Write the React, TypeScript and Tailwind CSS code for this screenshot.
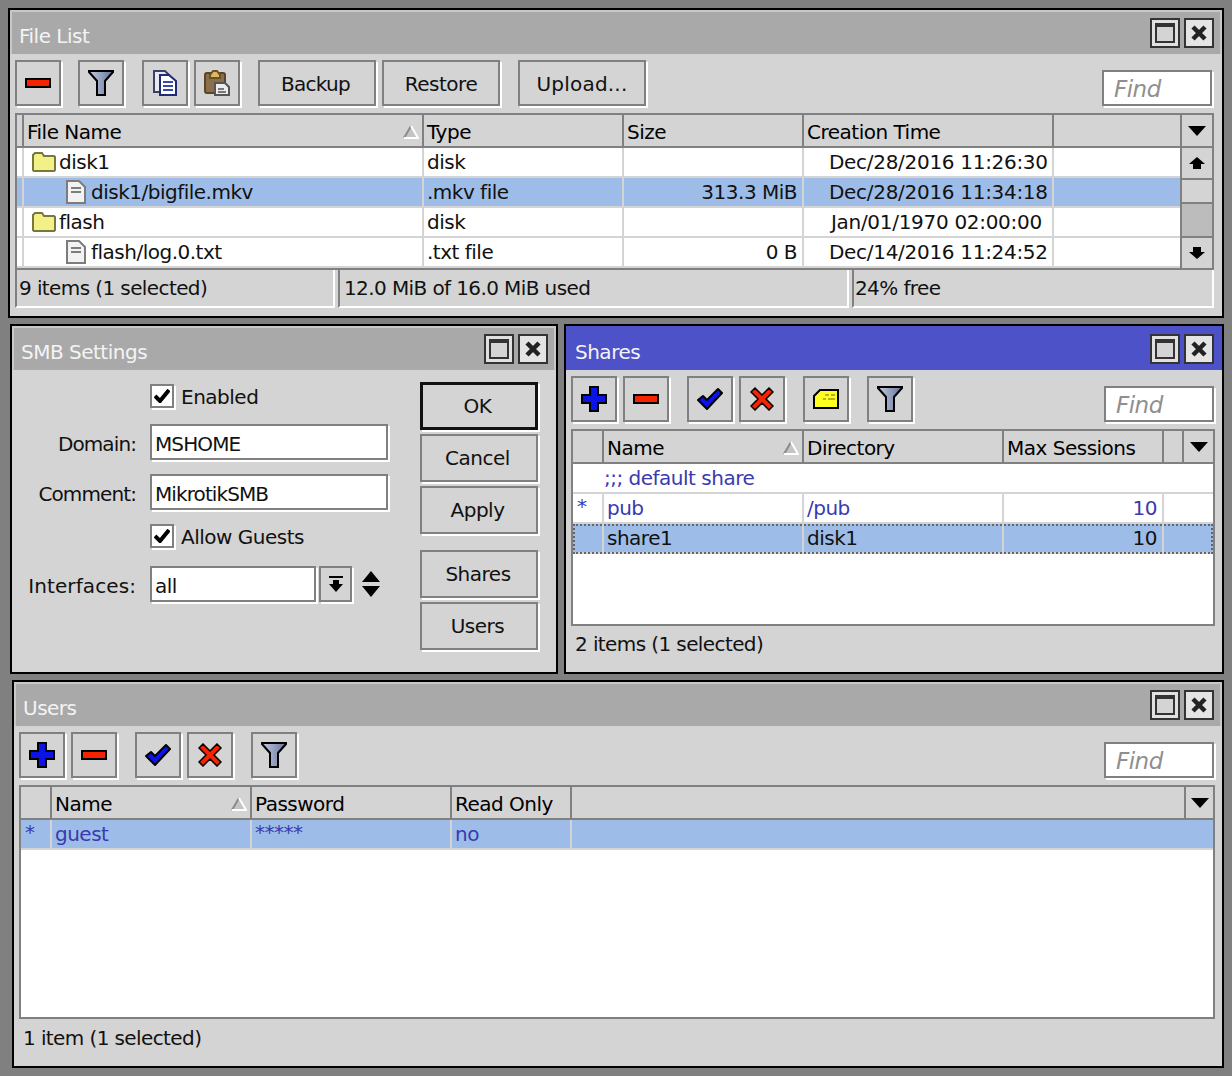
import type { ReactNode } from "react";

const Minus = () => (
  <svg width="26" height="10" viewBox="0 0 26 10">
    <rect x="1" y="1" width="24" height="8" fill="#f52300" stroke="#000" strokeWidth="2" />
  </svg>
);

const Plus = () => (
  <svg width="26" height="26" viewBox="0 0 26 26">
    <path d="M9 1h8v8h8v8h-8v8H9v-8H1V9h8z" fill="#0a14e6" stroke="#000" strokeWidth="2" />
  </svg>
);

const Check = () => (
  <svg width="26" height="24" viewBox="0 0 26 24">
    <path d="M1 13l5-4 4 4L21 2l4 4L10 22z" fill="#0a14e6" stroke="#000" strokeWidth="2" strokeLinejoin="round" />
  </svg>
);

const Cross = () => (
  <svg width="24" height="24" viewBox="0 0 24 24">
    <path d="M1 5l4-4 7 7 7-7 4 4-7 7 7 7-4 4-7-7-7 7-4-4 7-7z" fill="#f52300" stroke="#000" strokeWidth="1.5" />
  </svg>
);

const Funnel = ({ id }: { id: string }) => (
  <svg width="26" height="28" viewBox="0 0 26 28">
    <defs>
      <linearGradient id={id} x1="0" x2="1" y1="0" y2="0">
        <stop offset="0" stopColor="#c2cbe0" />
        <stop offset="1" stopColor="#66749c" />
      </linearGradient>
    </defs>
    <path d="M1 2h24v1l-8 9v14H9V12L1 3z" fill={`url(#${id})`} stroke="#000" strokeWidth="2" />
  </svg>
);

const Copy = () => (
  <svg width="24" height="26" viewBox="0 0 24 26">
    <path d="M1 1h11l4 4v17H1z" fill="#e8e8ee" stroke="#3c3f66" strokeWidth="2" />
    <path d="M7 5h9l7 6v14H7z" fill="#fff" stroke="#1f2a78" strokeWidth="2" />
    <path d="M10 12h10M10 16h10M10 20h10" stroke="#3a4aa8" strokeWidth="2" />
  </svg>
);

const Paste = () => (
  <svg width="26" height="26" viewBox="0 0 26 26">
    <rect x="1" y="3" width="20" height="20" rx="2" fill="#8a6f4a" stroke="#5a4526" strokeWidth="2" />
    <path d="M6 5l3-4h4l3 4v3H6z" fill="#e0b860" stroke="#6a5228" strokeWidth="2" />
    <path d="M11 13h10l4 4v8H11z" fill="#ececec" stroke="#555" strokeWidth="2" />
    <path d="M14 19h6M14 22h8" stroke="#777" strokeWidth="2" />
  </svg>
);

const Note = () => (
  <svg width="26" height="20" viewBox="0 0 26 20">
    <path d="M1 7l6-6h18v18H1z" fill="#ffff20" stroke="#000" strokeWidth="2" />
    <path d="M12 6h4M18 6h4M10 10h3M15 10h7" stroke="#b5b520" strokeWidth="2" />
  </svg>
);

const Folder = () => (
  <svg width="24" height="20" viewBox="0 0 24 20" className="mr-[3px] shrink-0">
    <path d="M1 3l2-2h7l2 3h10l1 1v13l-1 1H2l-1-1z" fill="#f4f088" stroke="#77773f" strokeWidth="2" />
  </svg>
);

const FileIcon = () => (
  <svg width="20" height="24" viewBox="0 0 20 24" className="mr-[5px] shrink-0">
    <path d="M1 1h12l6 6v16H1z" fill="#f2f2f2" stroke="#7c7c7c" strokeWidth="2" />
    <path d="M5 8h10M5 12h10" stroke="#7c7c7c" strokeWidth="2" />
  </svg>
);

const SortMark = () => (
  <svg width="16" height="14" viewBox="0 0 16 14" className="shrink-0">
    <path d="M8 1L1 13h14z" fill="#c4c4c4" />
    <path d="M8 1L1 13" fill="none" stroke="#8a8a8a" strokeWidth="2" />
    <path d="M8 1l7 12H1" fill="none" stroke="#fff" strokeWidth="2" />
  </svg>
);

const DownTri = () => (
  <svg width="18" height="10" viewBox="0 0 18 10">
    <path d="M0 0h18L9 10z" fill="#000" />
  </svg>
);

const ScrollArrow = ({ up }: { up?: boolean }) => (
  <svg width="16" height="12" viewBox="0 0 16 12">
    <path d={up ? "M8 0l8 7h-4v5H4V7H0z" : "M4 0h8v5h4l-8 7-8-7h4z"} fill="#000" />
  </svg>
);

function WinBtns() {
  return (
    <div className="flex items-center gap-[4px]">
      <div className="flex h-[30px] w-[30px] items-center justify-center border-2 border-[#333] bg-[#e0e0e0]">
        <div className="h-[20px] w-[20px] border-2 border-t-4 border-[#333] bg-[#d4d4d4]" />
      </div>
      <div className="flex h-[30px] w-[30px] items-center justify-center border-2 border-[#333] bg-[#e4e4e4]">
        <svg width="16" height="16" viewBox="0 0 16 16">
          <path d="M2 2l12 12M14 2L2 14" stroke="#222" strokeWidth="4.5" />
        </svg>
      </div>
    </div>
  );
}

function Win({
  title,
  className,
  titleClass = "bg-[#a9a9a9]",
  edgeClass = "border-[#c8c8c8]",
  children,
}: {
  title: string;
  className: string;
  titleClass?: string;
  edgeClass?: string;
  children: ReactNode;
}) {
  return (
    <section className={`flex flex-col border-2 border-black bg-[#d4d4d4] ${className}`}>
      <div className={`border-2 border-b-0 ${edgeClass}`}>
        <header className={`flex h-[42px] items-center justify-between pl-[7px] pr-[6px] text-[#f4f4f4] ${titleClass}`}>
          <span className="pt-[5px]">{title}</span>
          <WinBtns />
        </header>
      </div>
      {children}
    </section>
  );
}

function Btn({ children, className = "w-[46px]", active }: { children: ReactNode; className?: string; active?: boolean }) {
  return (
    <button
      type="button"
      className={`flex h-[46px] shrink-0 items-center justify-center bg-[#d4d4d4] text-[#111] shadow-[2px_2px_0_#fff] ${
        active ? "border-[3px] border-[#111]" : "border-2 border-[#808080]"
      } ${className}`}
    >
      {children}
    </button>
  );
}

function Find() {
  return (
    <div className="ml-auto mt-[10px] flex h-[36px] w-[110px] items-center border-2 border-[#808080] bg-white pl-[10px] pt-[2px] text-[23px] text-[#8f8f8f] italic shadow-[2px_2px_0_#fff]">
      Find
    </div>
  );
}

type Col = { label?: string; w: string; right?: boolean; sort?: boolean };
type Cell = { text?: string; icon?: ReactNode; pad?: string };
type Row = { cells: Cell[]; selected?: boolean; blue?: boolean; focus?: boolean; comment?: string };

function Table({ cols, rows, className, scroll }: { cols: Col[]; rows: Row[]; className: string; scroll?: boolean }) {
  return (
    <div className={`flex flex-col border-2 border-[#808080] bg-white ${className}`}>
      <div className="flex h-[33px] shrink-0 border-b-2 border-[#808080] bg-[#d4d4d4]">
        {cols.map((col, i) => (
          <div key={i} className={`flex shrink-0 items-center justify-between border-r-2 border-[#808080] pr-[3px] pt-[2px] ${col.label ? "pl-[3px]" : ""} ${col.w}`}>
            <span>{col.label}</span>
            {col.sort && <SortMark />}
          </div>
        ))}
        <div className="flex min-w-0 flex-1 items-center justify-center">
          <DownTri />
        </div>
      </div>
      <div className="flex min-h-0 flex-1">
        <div className="min-w-0 flex-1">
          {rows.map((row, r) => (
            <div
              key={r}
              className={`flex h-[30px] border-b-2 border-[#d4d4d4] ${row.selected ? "bg-[#9dbde8]" : "bg-white"} ${
                row.blue ? "text-[#3a3ab0]" : "text-[#111]"
              } ${row.focus ? "outline-2 outline-dotted outline-[#666] -outline-offset-2" : ""}`}
            >
              {row.comment ? (
                <div className="flex items-center pl-[31px] text-[#3a3ab0]">{row.comment}</div>
              ) : (
                row.cells.map((cell, i) => (
                  <div
                    key={i}
                    className={`flex shrink-0 items-center overflow-hidden border-r-2 border-[#d4d4d4] last:border-r-0 ${cols[i]?.w ?? ""} ${
                      cols[i]?.right ? "justify-end" : ""
                    } ${cell.text ? "pr-[5px]" : ""} ${cell.pad ?? (cell.text ? "pl-[3px]" : "")}`}
                  >
                    {cell.icon}
                    {cell.text && <span className="whitespace-nowrap">{cell.text}</span>}
                  </div>
                ))
              )}
            </div>
          ))}
        </div>
        {scroll && (
          <div className="flex w-[32px] shrink-0 flex-col border-l-2 border-[#808080] bg-[#bcbcbc]">
            <div className="flex h-[32px] items-center justify-center border-b-2 border-[#808080] bg-[#d4d4d4]">
              <ScrollArrow up />
            </div>
            <div className="h-[24px] border-b-2 border-[#808080] bg-[#d4d4d4]" />
            <div className="flex-1" />
            <div className="flex h-[32px] items-center justify-center border-t-2 border-[#808080] bg-[#d4d4d4]">
              <ScrollArrow />
            </div>
          </div>
        )}
      </div>
    </div>
  );
}

function Status({ children, className }: { children: ReactNode; className: string }) {
  return (
    <div className={`flex h-[38px] items-center border-b-2 border-l-2 border-r-2 border-b-white border-l-[#808080] border-r-white text-[#111] ${className}`}>
      {children}
    </div>
  );
}

function FieldRow({ label, value, className }: { label: string; value: string; className: string }) {
  return (
    <div className={`flex items-center ${className}`}>
      <label className="w-[124px] pt-[3px] text-right tracking-[-0.9px] text-[#111]">{label}</label>
      <div className="ml-[14px] flex h-[36px] w-[238px] items-center border-2 border-[#808080] bg-white pl-[3px] pt-[3px] tracking-[-0.9px] text-[#111] shadow-[2px_2px_0_#fff]">
        {value}
      </div>
    </div>
  );
}

function CheckRow({ label, className }: { label: string; className: string }) {
  return (
    <div className={`ml-[138px] flex items-center gap-[7px] text-[#111] ${className}`}>
      <div className="flex h-[24px] w-[24px] items-center justify-center border-2 border-[#808080] bg-white shadow-[2px_2px_0_#fff]">
        <svg width="16" height="14" viewBox="0 0 16 14">
          <path d="M1 7l5 5 9-11" fill="none" stroke="#000" strokeWidth="4" />
        </svg>
      </div>
      <span className="pt-[2px]">{label}</span>
    </div>
  );
}

const fileCols: Col[] = [
  { w: "w-[7px]" },
  { label: "File Name", w: "w-[400px]", sort: true },
  { label: "Type", w: "w-[200px]" },
  { label: "Size", w: "w-[180px]", right: true },
  { label: "Creation Time", w: "w-[250px]" },
  { w: "w-[128px]" },
];

const fileRows: Row[] = [
  { cells: [{}, { text: "disk1", icon: <Folder />, pad: "pl-[8px]" }, { text: "disk" }, {}, { text: "Dec/28/2016 11:26:30", pad: "pl-[25px] tracking-[-0.3px]" }, {}] },
  { selected: true, cells: [{}, { text: "disk1/bigfile.mkv", icon: <FileIcon />, pad: "pl-[42px]" }, { text: ".mkv file" }, { text: "313.3 MiB" }, { text: "Dec/28/2016 11:34:18", pad: "pl-[25px] tracking-[-0.3px]" }, {}] },
  { cells: [{}, { text: "flash", icon: <Folder />, pad: "pl-[8px]" }, { text: "disk" }, {}, { text: "Jan/01/1970 02:00:00", pad: "pl-[27px] tracking-[-0.3px]" }, {}] },
  { cells: [{}, { text: "flash/log.0.txt", icon: <FileIcon />, pad: "pl-[42px]" }, { text: ".txt file" }, { text: "0 B" }, { text: "Dec/14/2016 11:24:52", pad: "pl-[25px] tracking-[-0.3px]" }, {}] },
];

const shareCols: Col[] = [
  { w: "w-[31px]" },
  { label: "Name", w: "w-[200px]", sort: true },
  { label: "Directory", w: "w-[200px]" },
  { label: "Max Sessions", w: "w-[160px]", right: true },
  { w: "w-[20px]" },
];

const shareRows: Row[] = [
  { cells: [], comment: ";;; default share" },
  { blue: true, cells: [{ text: "*", pad: "pl-[4px] pb-[5px]" }, { text: "pub" }, { text: "/pub" }, { text: "10" }, {}] },
  { selected: true, focus: true, cells: [{}, { text: "share1" }, { text: "disk1" }, { text: "10" }, {}] },
];

const userCols: Col[] = [
  { w: "w-[31px]" },
  { label: "Name", w: "w-[200px]", sort: true },
  { label: "Password", w: "w-[200px]" },
  { label: "Read Only", w: "w-[120px]" },
  { w: "w-[614px]" },
];

const userRows: Row[] = [
  { selected: true, blue: true, cells: [{ text: "*", pad: "pl-[4px] pb-[5px]" }, { text: "guest" }, { text: "*****", pad: "pl-[3px] pb-[5px]" }, { text: "no" }, {}] },
];

export default function App() {
  return (
    <div className="flex h-[1076px] w-[1232px] flex-col overflow-hidden bg-[#808080] pt-[8px] font-['DejaVu_Sans',sans-serif] text-[20px] leading-none tracking-[-0.5px]">
      {/* File List */}
      <Win title="File List" className="ml-[8px] h-[310px] w-[1216px]">
        <div className="flex gap-[6px] pl-[5px] pr-[10px] pt-[6px]">
          <Btn><Minus /></Btn>
          <Btn className="ml-[11px] w-[46px]"><Funnel id="funnelFile" /></Btn>
          <Btn className="ml-[12px] w-[46px]"><Copy /></Btn>
          <Btn><Paste /></Btn>
          <Btn className="ml-[12px] w-[118px] pr-[3px] pt-[2px] tracking-[-0.7px]">Backup</Btn>
          <Btn className="w-[118px] pt-[2px]">Restore</Btn>
          <Btn className="ml-[12px] w-[128px] pt-[2px] tracking-[0.2px]">Upload...</Btn>
          <Find />
        </div>
        <Table cols={fileCols} rows={fileRows} scroll className="ml-[5px] mr-[8px] mt-[7px] h-[157px]" />
        <div className="ml-[5px] mr-[8px] flex gap-[3px] tracking-[-0.6px]">
          <Status className="w-[320px] pl-[2px]">9 items (1 selected)</Status>
          <Status className="w-[511px] pl-[4px]">12.0 MiB of 16.0 MiB used</Status>
          <Status className="w-[362px] pl-[1px]">24% free</Status>
        </div>
      </Win>

      <div className="ml-[10px] mt-[6px] flex gap-[6px]">
        {/* SMB Settings */}
        <Win title="SMB Settings" className="h-[350px] w-[548px]">
          <div className="flex">
            <div className="w-[406px]">
              <CheckRow label="Enabled" className="mt-[14px]" />
              <FieldRow label="Domain:" value="MSHOME" className="mt-[16px]" />
              <FieldRow label="Comment:" value="MikrotikSMB" className="mt-[14px]" />
              <CheckRow label="Allow Guests" className="mt-[14px]" />
              <div className="mt-[18px] flex items-center">
                <label className="w-[124px] pt-[3px] text-right tracking-[0.1px] text-[#111]">Interfaces:</label>
                <div className="ml-[14px] flex h-[36px] w-[166px] items-center border-2 border-[#808080] bg-white pl-[3px] pt-[3px] text-[#111] shadow-[2px_2px_0_#fff]">
                  all
                </div>
                <div className="ml-[3px] flex h-[36px] w-[33px] items-center justify-center border-2 border-[#808080] shadow-[2px_2px_0_#fff]">
                  <svg width="16" height="18" viewBox="0 0 16 18">
                    <path d="M1 1h14v2H1zM5 5h6v4h4l-7 8-7-8h4z" fill="#000" />
                  </svg>
                </div>
                <svg width="20" height="26" viewBox="0 0 20 26" className="ml-[9px]">
                  <path d="M10 0l9 11H1zM10 26L1 15h18z" fill="#000" />
                </svg>
              </div>
            </div>
            <div className="ml-[2px] flex w-[118px] flex-col gap-[4px] pt-[12px]">
              <Btn active className="h-[48px] w-[118px] pr-[3px]">OK</Btn>
              <Btn className="h-[48px] w-[118px] pr-[3px]">Cancel</Btn>
              <Btn className="h-[48px] w-[118px] pr-[3px]">Apply</Btn>
              <Btn className="mt-[12px] h-[48px] w-[118px] pr-[2px]">Shares</Btn>
              <Btn className="h-[48px] w-[118px] pr-[3px]">Users</Btn>
            </div>
          </div>
        </Win>

        {/* Shares */}
        <Win title="Shares" titleClass="bg-[#4d52c8]" edgeClass="border-[#4d52c8]" className="h-[350px] w-[660px]">
          <div className="flex gap-[6px] pl-[5px] pr-[8px] pt-[6px]">
            <Btn><Plus /></Btn>
            <Btn><Minus /></Btn>
            <Btn className="ml-[12px] w-[46px]"><Check /></Btn>
            <Btn><Cross /></Btn>
            <Btn className="ml-[12px] w-[46px]"><Note /></Btn>
            <Btn className="ml-[12px] w-[46px]"><Funnel id="funnelShares" /></Btn>
            <Find />
          </div>
          <Table cols={shareCols} rows={shareRows} className="ml-[5px] mr-[7px] mt-[7px] h-[197px]" />
          <div className="flex h-[36px] items-center pl-[9px] tracking-[-0.6px] text-[#111]">2 items (1 selected)</div>
        </Win>
      </div>

      {/* Users */}
      <Win title="Users" className="ml-[12px] mt-[6px] h-[388px] w-[1212px]">
        <div className="flex gap-[6px] pl-[5px] pr-[8px] pt-[6px]">
          <Btn><Plus /></Btn>
          <Btn><Minus /></Btn>
          <Btn className="ml-[12px] w-[46px]"><Check /></Btn>
          <Btn><Cross /></Btn>
          <Btn className="ml-[12px] w-[46px]"><Funnel id="funnelUsers" /></Btn>
          <Find />
        </div>
        <Table cols={userCols} rows={userRows} className="ml-[5px] mr-[7px] mt-[7px] h-[234px]" />
        <div className="flex h-[38px] items-center pl-[9px] tracking-[-0.6px] text-[#111]">1 item (1 selected)</div>
      </Win>
    </div>
  );
}
